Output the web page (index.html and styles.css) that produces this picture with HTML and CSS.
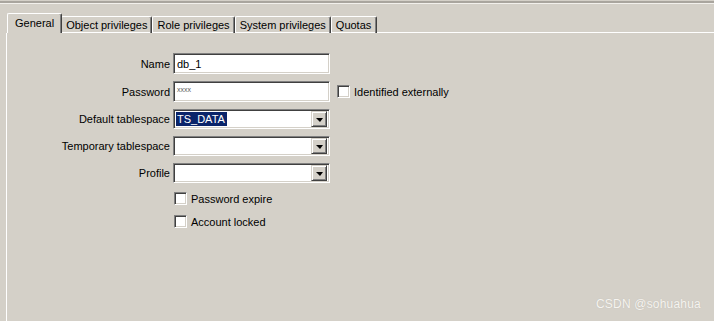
FILE: index.html
```html
<!DOCTYPE html>
<html>
<head>
<meta charset="utf-8">
<link rel="stylesheet" href="styles.css">
</head>
<body>
<div class="window">
  <div class="topedge"></div>
  <div class="panel">
    <div class="tabs">
      <div class="tab active">General</div>
      <div class="tab">Object privileges</div>
      <div class="tab">Role privileges</div>
      <div class="tab">System privileges</div>
      <div class="tab">Quotas</div>
    </div>
    <div class="page">
      <div class="form">
        <label class="lbl">Name</label>
        <div class="field"><span class="val">db_1</span></div>
        <div></div>

        <label class="lbl">Password</label>
        <div class="field"><span class="pw">xxxx</span></div>
        <div class="check side"><span class="box"></span><span>Identified externally</span></div>

        <label class="lbl">Default tablespace</label>
        <div class="field combo"><span class="sel">TS_DATA</span><span class="btn"><span class="tri"></span></span></div>
        <div></div>

        <label class="lbl">Temporary tablespace</label>
        <div class="field combo"><span></span><span class="btn"><span class="tri"></span></span></div>
        <div></div>

        <label class="lbl">Profile</label>
        <div class="field combo"><span></span><span class="btn"><span class="tri"></span></span></div>
        <div></div>
      </div>
      <div class="checks">
        <div class="check"><span class="box"></span><span>Password expire</span></div>
        <div class="check"><span class="box"></span><span>Account locked</span></div>
      </div>
    </div>
  </div>
  <div class="watermark">CSDN @sohuahua</div>
</div>
</body>
</html>
```
FILE: styles.css
```css
html, body {
  margin: 0;
  padding: 0;
}
body {
  background: #d4d0c8;
  font-family: "Liberation Sans", Arial, sans-serif;
  font-size: 11px;
  color: #000;
}
.window {
  position: relative;
  width: 714px;
  height: 321px;
  overflow: hidden;
}
.topedge {
  margin-top: 1px;
  height: 2px;
  background: #a9a59e;
  border-bottom: 1px solid #f2f0ec;
}
.panel {
  margin-left: 6px;
  margin-top: 10px;
  border-left: 1px solid #ffffff;
  height: 400px;
  position: relative;
}
.tabs {
  display: flex;
  align-items: flex-end;
  height: 19px;
  padding-left: 1px;
  margin-left: -1px;
  background: #d4d0c8;
}
.tab {
  height: 16px;
  line-height: 16px;
  padding: 0 4px;
  border-top: 1px solid #ffffff;
  border-left: 1px solid #ffffff;
  border-right: 1px solid #404040;
  box-shadow: inset -1px 0 #808080;
  border-radius: 2px 2px 0 0;
  white-space: nowrap;
}
.tab:last-child {
  padding-right: 5px;
}
.tab.active {
  height: 19px;
  line-height: 19px;
  padding: 0 7px 0 7px;
  margin-right: -1px;
  position: relative;
  z-index: 1;
  background: #d4d0c8;
}
.page {
  border-top: 1px solid #ffffff;
  margin-top: -1px;
  padding-top: 20px;
}
.form {
  display: grid;
  grid-template-columns: 163px 157px auto;
  column-gap: 3px;
  row-gap: 7px;
  align-items: center;
}
.lbl {
  text-align: right;
}
.field {
  box-sizing: border-box;
  height: 21px;
  background: #ffffff;
  border: 1px solid;
  border-color: #808080 #ffffff #ffffff #808080;
  box-shadow: inset 1px 1px #404040, inset -1px -1px #d4d0c8;
  display: flex;
  align-items: center;
  padding-left: 2px;
}
.val {
  padding-left: 1px;
}
.pw {
  font-size: 7px;
  color: #606060;
  align-self: flex-start;
  margin-top: 4px;
  padding-left: 1px;
}
.combo {
  height: 20px;
  justify-content: space-between;
  padding-right: 2px;
}
.sel {
  background: #0a246a;
  color: #ffffff;
  padding: 0 2px 0 1px;
  line-height: 14px;
  height: 14px;
}
.btn {
  width: 16px;
  height: 16px;
  box-sizing: border-box;
  background: #d4d0c8;
  border: 1px solid;
  border-color: #d4d0c8 #404040 #404040 #d4d0c8;
  box-shadow: inset 1px 1px #ffffff, inset -1px -1px #808080;
  display: flex;
  align-items: center;
  justify-content: center;
}
.tri {
  width: 0;
  height: 0;
  border-left: 4px solid transparent;
  border-right: 3px solid transparent;
  border-top: 4px solid #000;
  margin-top: 1px;
}
.check {
  display: flex;
  align-items: center;
  gap: 4px;
}
.side {
  margin-left: 4px;
}
.box {
  box-sizing: border-box;
  width: 13px;
  height: 13px;
  background: #ffffff;
  border: 1px solid;
  border-color: #808080 #ffffff #ffffff #808080;
  box-shadow: inset 1px 1px #404040, inset -1px -1px #d4d0c8;
}
.checks {
  display: flex;
  flex-direction: column;
  gap: 10px;
  margin-left: 167px;
  margin-top: 9px;
}
.watermark {
  position: absolute;
  right: 13px;
  bottom: 10px;
  font-size: 12px;
  color: #f6f4f0;
  text-shadow: 0 0 1px #b8b4ac;
  letter-spacing: 0.2px;
}
```
